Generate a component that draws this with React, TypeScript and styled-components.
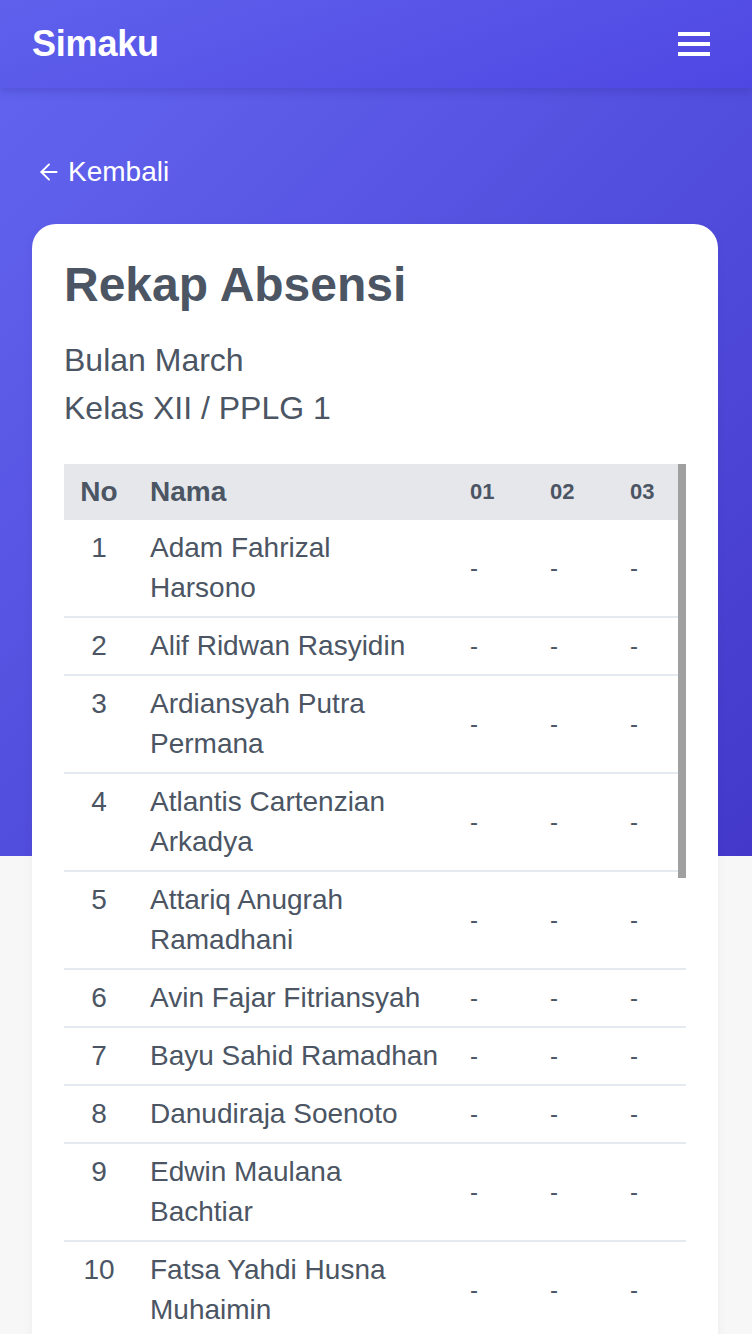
import React from "react";
import styled, { createGlobalStyle } from "styled-components";
import { ArrowLeft } from "lucide-react";

const GlobalStyle = createGlobalStyle`
  *, *::before, *::after { box-sizing: border-box; }
  html, body { margin: 0; padding: 0; }
  body {
    background: #f7f7f8;
    font-family: "Liberation Sans", Arial, Helvetica, sans-serif;
    color: #4b5563;
  }
`;

const Page = styled.div`
  height: 1334px;
  overflow: hidden;
  background: linear-gradient(135deg, #6366f1 0%, #4338ca 100%) 0 0 / 100% 856px no-repeat,
    #f7f7f8;
`;

const Header = styled.header`
  height: 88px;
  display: flex;
  align-items: center;
  justify-content: space-between;
  padding: 0 42px 0 32px;
  background: linear-gradient(160deg, #5f61ec 0%, #4f47e3 100%);
  box-shadow: 0 4px 8px rgba(40, 30, 140, 0.22);
  position: relative;
  z-index: 1;
`;

const Brand = styled.div`
  font-size: 36px;
  font-weight: 700;
  color: #ffffff;
  letter-spacing: -0.2px;
`;

const MenuButton = styled.button`
  display: flex;
  flex-direction: column;
  gap: 6px;
  padding: 0;
  border: none;
  background: transparent;
  cursor: pointer;
`;

const MenuBar = styled.span`
  display: block;
  width: 32px;
  height: 4px;
  background: #ffffff;
`;

const Content = styled.main`
  padding: 64px 34px 0 32px;
`;

const BackLink = styled.a`
  display: inline-flex;
  align-items: center;
  gap: 6px;
  height: 40px;
  padding-left: 4px;
  font-size: 28px;
  color: #ffffff;
  text-decoration: none;
`;

const Card = styled.section`
  margin-top: 32px;
  background: #ffffff;
  border-radius: 24px 24px 0 0;
  padding: 32px 32px 0;
  box-shadow: 0 2px 10px rgba(0, 0, 0, 0.05);
`;

const Title = styled.h1`
  margin: 0 0 22px;
  font-size: 48px;
  line-height: 58px;
  font-weight: 700;
  color: #4b5563;
`;

const Meta = styled.p`
  margin: 0;
  font-size: 32px;
  line-height: 48px;
  color: #4b5563;
`;

const TableWrap = styled.div`
  position: relative;
  margin-top: 32px;
  overflow: hidden;
`;

const ScrollThumb = styled.div`
  position: absolute;
  top: 0;
  right: 0;
  width: 8px;
  height: 414px;
  background: #a0a0a0;
  z-index: 2;
`;

const Table = styled.table`
  border-collapse: collapse;
  table-layout: fixed;
  width: 100%;
`;

const HeadRow = styled.tr`
  background: #e5e7eb;
`;

const Th = styled.th<{ $small?: boolean; $center?: boolean }>`
  padding: 8px 16px;
  height: 56px;
  font-size: ${(p) => (p.$small ? "22px" : "28px")};
  line-height: 40px;
  font-weight: 700;
  text-align: ${(p) => (p.$center ? "center" : "left")};
  color: #4b5563;
  white-space: nowrap;
`;

const Row = styled.tr`
  border-bottom: 2px solid #e5e9f0;
`;

const NoCell = styled.td`
  padding: 8px 0;
  font-size: 28px;
  line-height: 40px;
  text-align: center;
  vertical-align: top;
`;

const NameCell = styled.td`
  padding: 8px 16px;
  font-size: 28px;
  line-height: 40px;
  vertical-align: top;
`;

const DayCell = styled.td`
  padding: 8px 16px;
  font-size: 24px;
  line-height: 40px;
  vertical-align: middle;
`;

const students = [
  "Adam Fahrizal Harsono",
  "Alif Ridwan Rasyidin",
  "Ardiansyah Putra Permana",
  "Atlantis Cartenzian Arkadya",
  "Attariq Anugrah Ramadhani",
  "Avin Fajar Fitriansyah",
  "Bayu Sahid Ramadhan",
  "Danudiraja Soenoto",
  "Edwin Maulana Bachtiar",
  "Fatsa Yahdi Husna Muhaimin",
];

const days = ["01", "02", "03"];

export default function App() {
  return (
    <>
      <GlobalStyle />
      <Page>
        <Header>
          <Brand>Simaku</Brand>
          <MenuButton aria-label="Menu">
            <MenuBar />
            <MenuBar />
            <MenuBar />
          </MenuButton>
        </Header>
        <Content>
          <BackLink href="#">
            <ArrowLeft size={26} strokeWidth={1.8} />
            Kembali
          </BackLink>
          <Card>
            <Title>Rekap Absensi</Title>
            <Meta>Bulan March</Meta>
            <Meta>Kelas XII / PPLG 1</Meta>
            <TableWrap>
              <ScrollThumb />
              <Table>
                <colgroup>
                  <col style={{ width: 70 }} />
                  <col style={{ width: 320 }} />
                  <col style={{ width: 80 }} />
                  <col style={{ width: 80 }} />
                  <col />
                </colgroup>
                <thead>
                  <HeadRow>
                    <Th $center>No</Th>
                    <Th>Nama</Th>
                    {days.map((d) => (
                      <Th key={d} $small>
                        {d}
                      </Th>
                    ))}
                  </HeadRow>
                </thead>
                <tbody>
                  {students.map((name, i) => (
                    <Row key={name}>
                      <NoCell>{i + 1}</NoCell>
                      <NameCell>{name}</NameCell>
                      {days.map((d) => (
                        <DayCell key={d}>-</DayCell>
                      ))}
                    </Row>
                  ))}
                </tbody>
              </Table>
            </TableWrap>
          </Card>
        </Content>
      </Page>
    </>
  );
}
